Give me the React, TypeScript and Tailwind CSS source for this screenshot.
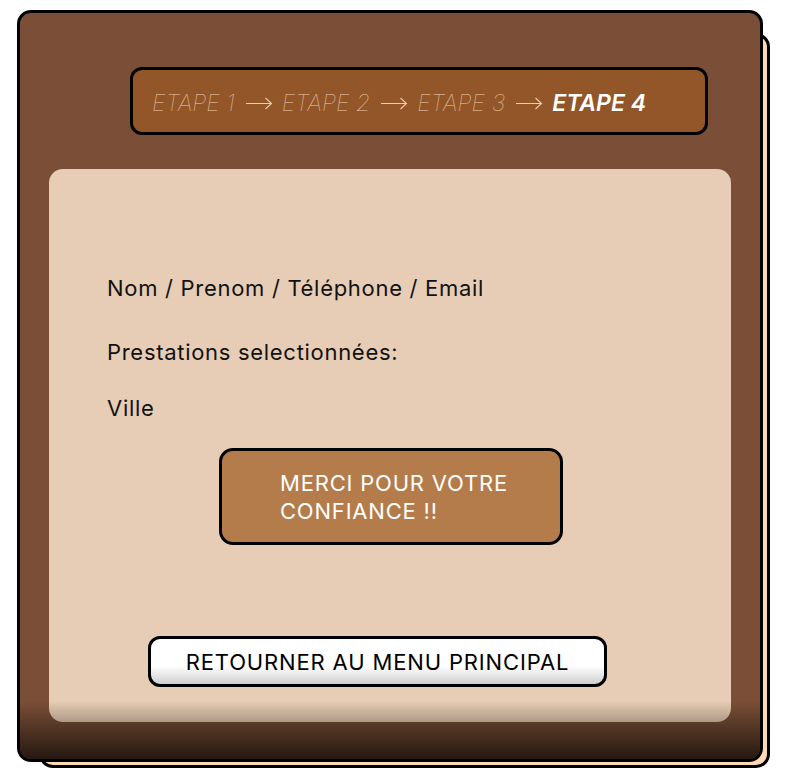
import React from "react";

function Arrow() {
  return (
    <svg width="28" height="14" viewBox="0 0 28 14" className="ml-[10px] mr-[9px] shrink-0" fill="none">
      <path d="M1 7.5 H26.5 M20.5 2 L26.5 7.5 L20.5 13" stroke="#ecccac" strokeWidth="1.1" />
    </svg>
  );
}

export default function App() {
  const font = { fontFamily: "Inter, 'Noto Sans', sans-serif" };
  return (
    <div className="w-[788px] h-[780px] bg-white relative" style={font}>
      <div className="absolute left-[17px] top-[10px] w-[746px] h-[752px]">
        {/* back card */}
        <div className="absolute left-[22px] top-[23px] -right-[7px] -bottom-[6px] rounded-[14px] border-[3px] border-black bg-[#fcd9b2]" />
        {/* main card */}
        <div className="relative h-full rounded-[14px] border-[3px] border-black bg-[#7b4f37] overflow-hidden flex flex-col">
          <div className="mt-[54px] ml-[110px] mr-[52px] h-[68px] rounded-[12px] border-[3px] border-black bg-[#935629] flex items-center pl-[19px] pt-[3px]">
            <div className="flex items-center text-[23px] leading-[32px] italic whitespace-nowrap">
              <span className="font-thin text-[#ecccac]">ETAPE 1</span>
              <Arrow />
              <span className="font-thin text-[#ecccac]">ETAPE 2</span>
              <Arrow />
              <span className="font-thin text-[#ecccac]">ETAPE 3</span>
              <Arrow />
              <span className="font-semibold text-white">ETAPE 4</span>
            </div>
          </div>
          <div className="mt-[34px] mx-[29px] mb-[37px] flex-1 rounded-[14px] bg-[#e7cdb5] flex flex-col pt-[105px] pl-[58px] text-[#111]">
            <div className="text-[22px] leading-[28px] tracking-[0.7px]">Nom / Prenom / Téléphone / Email</div>
            <div className="text-[22px] leading-[28px] tracking-[0.7px] mt-[36px]">Prestations selectionnées:</div>
            <div className="text-[22px] leading-[28px] tracking-[0.7px] mt-[28px]">Ville</div>
            <div className="mt-[26px] ml-[112px] w-[344px] h-[97px] rounded-[14px] border-[3px] border-black bg-[#b57c4b] flex items-center pl-[58px]">
              <div className="text-white text-[22px] leading-[28px] tracking-[0.8px]">
                MERCI POUR VOTRE
                <br />
                CONFIANCE !!
              </div>
            </div>
            <div className="mt-[91px] ml-[41px] w-[459px] h-[51px] rounded-[12px] border-[3px] border-black bg-gradient-to-b from-white from-60% to-[#cfcfcf] flex items-center justify-center">
              <span className="text-[22px] leading-[28px] tracking-[0.85px] text-black">RETOURNER AU MENU PRINCIPAL</span>
            </div>
          </div>
          {/* bottom dark gradient overlay */}
          <div className="absolute inset-x-0 bottom-0 h-[58px] bg-gradient-to-b from-transparent to-black/70 pointer-events-none" />
        </div>
      </div>
    </div>
  );
}
